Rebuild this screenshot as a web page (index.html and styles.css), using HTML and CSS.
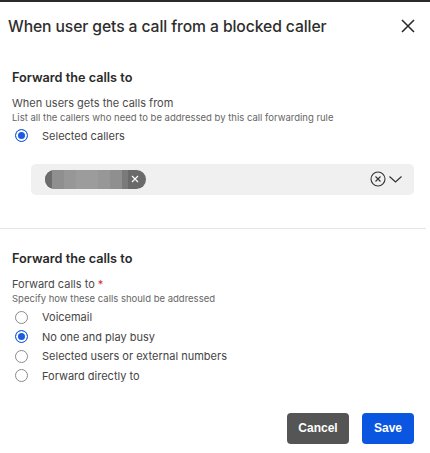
FILE: index.html
```html
<!DOCTYPE html>
<html>
<head>
<meta charset="utf-8">
<link rel="stylesheet" href="styles.css">
</head>
<body>
<div class="topbar"></div>
<div class="dialog">
  <header class="head">
    <h1 class="title">When user gets a call from a blocked caller</h1>
    <button class="close" aria-label="Close">
      <svg width="14" height="14" viewBox="0 0 14 14"><path d="M1 1L13 13M13 1L1 13" stroke="#2b2b2b" stroke-width="1.6" fill="none"/></svg>
    </button>
  </header>

  <section class="section first">
    <h2 class="sec-title">Forward the calls to</h2>
    <div class="label">When users gets the calls from</div>
    <div class="hint">List all the callers who need to be addressed by this call forwarding rule</div>
    <label class="radio"><span class="dot on"></span>Selected callers</label>
    <div class="select">
      <div class="chip">
        <span class="blur">
          <i class="b1"></i><i class="b2"></i><i class="b3"></i><i class="b4"></i><i class="b3"></i><i class="b2"></i><i class="b5"></i>
        </span>
        <svg class="chip-x" width="8" height="8" viewBox="0 0 8 8"><path d="M1 1L7 7M7 1L1 7" stroke="#fff" stroke-width="1.1"/></svg>
      </div>
      <div class="sel-icons">
        <svg width="16" height="16" viewBox="0 0 16 16"><circle cx="8" cy="8" r="7" stroke="#333" stroke-width="1.1" fill="none"/><path d="M5.5 5.5L10.5 10.5M10.5 5.5L5.5 10.5" stroke="#333" stroke-width="1.1"/></svg>
        <svg width="15" height="16" viewBox="0 0 15 16"><path d="M1.5 5.5L7.5 11L13.5 5.5" stroke="#333" stroke-width="1.2" fill="none"/></svg>
      </div>
    </div>
  </section>

  <div class="divider"></div>

  <section class="section second">
    <h2 class="sec-title">Forward the calls to</h2>
    <div class="label">Forward calls to <span class="req">*</span></div>
    <div class="hint">Specify how these calls should be addressed</div>
    <div class="radios">
      <label class="radio"><span class="dot"></span>Voicemail</label>
      <label class="radio"><span class="dot on"></span>No one and play busy</label>
      <label class="radio"><span class="dot"></span>Selected users or external numbers</label>
      <label class="radio"><span class="dot"></span>Forward directly to</label>
    </div>
  </section>

  <footer class="foot">
    <button class="btn cancel">Cancel</button>
    <button class="btn save">Save</button>
  </footer>
</div>
</body>
</html>
```

FILE: styles.css
```css
* { box-sizing: border-box; }
html, body { margin: 0; padding: 0; background: #fff; }
body {
  font-family: Inter, "Noto Sans", sans-serif;
  color: #333;
  width: 430px;
  height: 453px;
  overflow: hidden;
}
.topbar { height: 2px; background: #2b2b2b; }
.dialog { width: 428px; }
.head {
  display: flex;
  align-items: center;
  justify-content: space-between;
  padding: 2px 13px 0 8px;
  height: 46px;
}
.title {
  margin: 0;
  font-size: 15.7px;
  font-weight: 500;
  color: #2e2e2e;
  letter-spacing: -0.1px;
}
.close {
  border: 0; background: none; padding: 0; width: 14px; height: 14px;
  display: flex;
}
.section { padding: 0 12px; }
.section.first { padding-top: 22px; padding-bottom: 33px; }
.sec-title {
  margin: 0 0 10px 0;
  font-size: 12.7px;
  font-weight: 600;
  color: #2a2a2a;
  line-height: 16px;
}
.label { font-size: 11px; color: #4a4a4a; line-height: 14px; }
.hint { font-size: 9.5px; color: #666; line-height: 14px; margin-top: 1px; }
.radio {
  display: flex;
  align-items: center;
  font-size: 11px;
  color: #444;
  height: 19.5px;
  gap: 14px;
  padding-left: 3px;
}
.dot {
  width: 13px; height: 13px;
  border-radius: 50%;
  border: 1px solid #8a8a8a;
  background: #fff;
  flex: none;
}
.dot.on {
  border: 1.5px solid #1a5be0;
  box-shadow: inset 0 0 0 2px #fff;
  background: #1a5be0;
}
.first .radio { margin-top: 1px; }
.select {
  margin: 18px 2px 0 19px;
  height: 31px;
  background: #f0f0f0;
  border-radius: 5px;
  display: flex;
  align-items: center;
  justify-content: space-between;
  padding: 0 11px 0 14px;
}
.chip {
  width: 101px; height: 19px;
  border-radius: 10px;
  background: #6a6a6a;
  display: flex;
  align-items: center;
  padding: 0 7px 0 0;
  overflow: hidden;
}
.blur { display: flex; height: 19px; flex: 1; overflow: hidden; }
.blur i { display: block; height: 19px; flex: none; }
.b1 { width: 7px; background: #6c6c6c; }
.b2 { width: 12px; background: #8f8f8f; }
.b3 { width: 12px; background: #979797; }
.b4 { width: 22px; background: #9c9c9c; }
.b5 { width: 6px; background: #7a7a7a; }
.chip-x { flex: none; margin-left: 3px; }
.sel-icons { display: flex; align-items: center; gap: 2px; }
.divider { height: 1px; background: #e6e6e6; margin-right: 2px; }
.section.second { padding-top: 22px; }
.second .sec-title { margin-bottom: 10px; }
.req { color: #d03030; }
.radios { margin-top: 2px; }
.foot {
  display: flex;
  justify-content: flex-end;
  gap: 13px;
  padding: 27px 14px 0 0;
}
.btn {
  border: 0;
  height: 31px;
  border-radius: 4px;
  font-family: "Liberation Sans", Arial, sans-serif;
  font-weight: 700;
  font-size: 12px;
  color: #fff;
}
.cancel { width: 62px; background: #555; }
.save { width: 52px; background: #0a56e0; }
```
